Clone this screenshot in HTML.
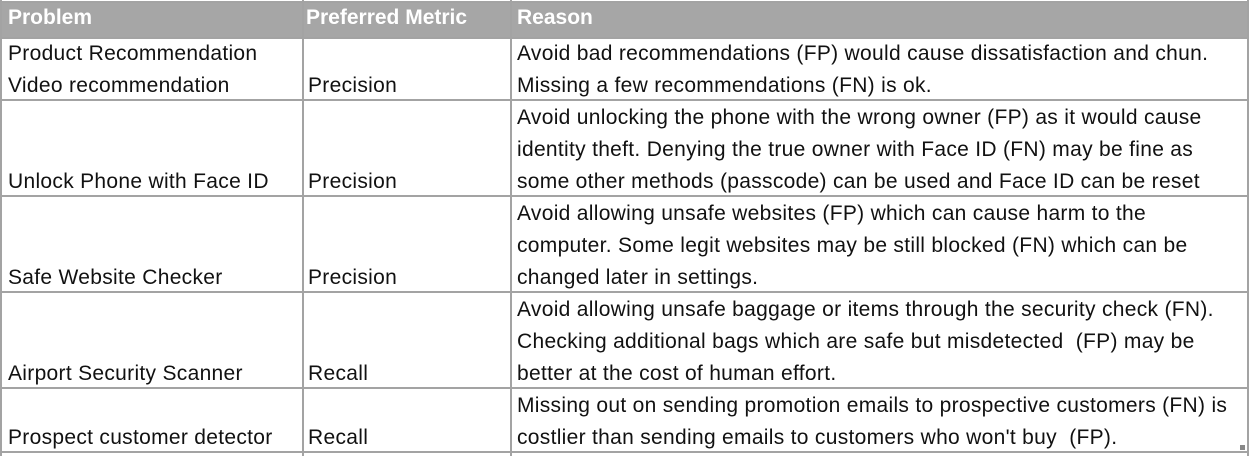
<!DOCTYPE html>
<html><head><meta charset="utf-8"><style>
body{margin:0;width:1250px;height:456px;background:#fff;position:relative;overflow:hidden;font-family:"Liberation Sans",sans-serif;font-size:21px;letter-spacing:0.3px;color:#111}
.h{position:absolute;left:0;top:3px;width:1248px;height:34px;background:#a6a6a6}
.ht{position:absolute;top:6px;color:#fff;font-weight:bold;font-size:21px;letter-spacing:0}
.hl{position:absolute;left:0;width:1248px;height:2px;background:#a3a3a3}
.vl{position:absolute;top:0;width:2px;height:456px;background:#a3a3a3}
.t{position:absolute;white-space:nowrap;line-height:32px}
</style></head><body>
<div class="h"></div>
<div class="hl" style="top:1px"></div>
<div class="hl" style="top:37px"></div>
<div class="hl" style="top:99px"></div>
<div class="hl" style="top:195px"></div>
<div class="hl" style="top:291px"></div>
<div class="hl" style="top:387px"></div>
<div class="hl" style="top:451px"></div>
<div class="vl" style="left:0"></div>
<div class="vl" style="left:302px"></div>
<div class="vl" style="left:510px"></div>
<div class="vl" style="left:1247px"></div>
<div class="ht" style="left:8px">Problem</div>
<div class="ht" style="left:306px">Preferred Metric</div>
<div class="ht" style="left:517px">Reason</div>

<div class="t" style="left:8px;top:38px">Product Recommendation<br>Video recommendation</div>
<div class="t" style="left:308px;top:70px">Precision</div>
<div class="t" style="left:517px;top:38px">Avoid bad recommendations (FP) would cause dissatisfaction and chun.<br>Missing a few recommendations (FN) is ok.</div>

<div class="t" style="left:8px;top:166px">Unlock Phone with Face ID</div>
<div class="t" style="left:308px;top:166px">Precision</div>
<div class="t" style="left:517px;top:102px">Avoid unlocking the phone with the wrong owner (FP) as it would cause<br>identity theft. Denying the true owner with Face ID (FN) may be fine as<br>some other methods (passcode) can be used and Face ID can be reset</div>

<div class="t" style="left:8px;top:262px">Safe Website Checker</div>
<div class="t" style="left:308px;top:262px">Precision</div>
<div class="t" style="left:517px;top:198px">Avoid allowing unsafe websites (FP) which can cause harm to the<br>computer. Some legit websites may be still blocked (FN) which can be<br>changed later in settings.</div>

<div class="t" style="left:8px;top:358px">Airport Security Scanner</div>
<div class="t" style="left:308px;top:358px">Recall</div>
<div class="t" style="left:517px;top:294px">Avoid allowing unsafe baggage or items through the security check (FN).<br>Checking additional bags which are safe but misdetected &nbsp;(FP) may be<br>better at the cost of human effort.</div>

<div class="t" style="left:8px;top:422px">Prospect customer detector</div>
<div class="t" style="left:308px;top:422px">Recall</div>
<div class="t" style="left:517px;top:390px">Missing out on sending promotion emails to prospective customers (FN) is<br>costlier than sending emails to customers who won't buy &nbsp;(FP).</div>
<div style="position:absolute;left:1240px;top:445px;width:5px;height:5px;background:#888"></div>
</body></html>
